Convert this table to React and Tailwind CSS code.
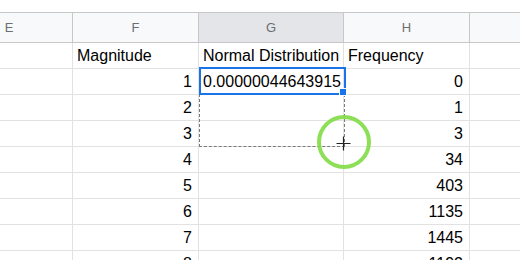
import React from "react";

const rows = [
  ["", "Magnitude", "Normal Distribution", "Frequency", "", true],
  ["", "1", "0.00000044643915", "0", ""],
  ["", "2", "", "1", ""],
  ["", "3", "", "3", ""],
  ["", "4", "", "34", ""],
  ["", "5", "", "403", ""],
  ["", "6", "", "1135", ""],
  ["", "7", "", "1445", ""],
  ["", "8", "", "1192", ""],
];

const cols = "grid-cols-[127px_126px_145px_126px_100px]";

export default function App() {
  return (
    <div className="relative w-[520px] h-[260px] overflow-hidden bg-white font-['Liberation_Sans',Arial,sans-serif]">
      <div className="h-[12px]" />
      <div className="-ml-[54px]">
        <div className={`grid ${cols} h-[31px] border-y border-[#c7c7c7] text-[13px] text-[#6b6e72]`}>
          {["E", "F", "G", "H", ""].map((c, i) => (
            <div
              key={i}
              className={`flex items-center justify-center border-r border-[#c7c7c7] ${i === 2 ? "bg-[#e3e5e8]" : "bg-[#f8f9fa]"}`}
            >
              {c}
            </div>
          ))}
        </div>
        {rows.map((r, ri) => (
          <div key={ri} className={`grid ${cols} h-[26px] text-[16px] text-black`}>
            {r.slice(0, 5).map((v, ci) => {
              const header = r[5];
              const numeric = !header && (ci === 1 || ci === 3);
              return (
                <div
                  key={ci}
                  className={`flex items-center border-b border-r border-[#e2e2e2] leading-none whitespace-nowrap overflow-visible ${
                    numeric ? "justify-end pr-[6px]" : "justify-start pl-[4px]"
                  }`}
                >
                  {v}
                </div>
              );
            })}
          </div>
        ))}
      </div>

      {/* dashed fill range */}
      <div className="absolute left-[199px] top-[94px] w-[146px] h-[53px] border border-dashed border-[#7a7a7a]" />

      {/* active selection */}
      <div className="absolute left-[199px] top-[67px] w-[147px] h-[28px] border-2 border-[#1a73e8]" />
      <div className="absolute left-[339px] top-[88px] w-[8px] h-[8px] bg-[#1a73e8] border border-white" />

      {/* green click circle */}
      <div className="absolute left-[317px] top-[115px] w-[54px] h-[54px] rounded-full border-[4px] border-[#80dc45] opacity-90 blur-[0.4px]" />

      {/* crosshair cursor */}
      <svg className="absolute left-[336px] top-[136px]" width="15" height="15" viewBox="0 0 15 15">
        <path d="M7.5 0.5V14.5M0.5 7.5H14.5" stroke="#222" strokeWidth="1.2" />
      </svg>
    </div>
  );
}
